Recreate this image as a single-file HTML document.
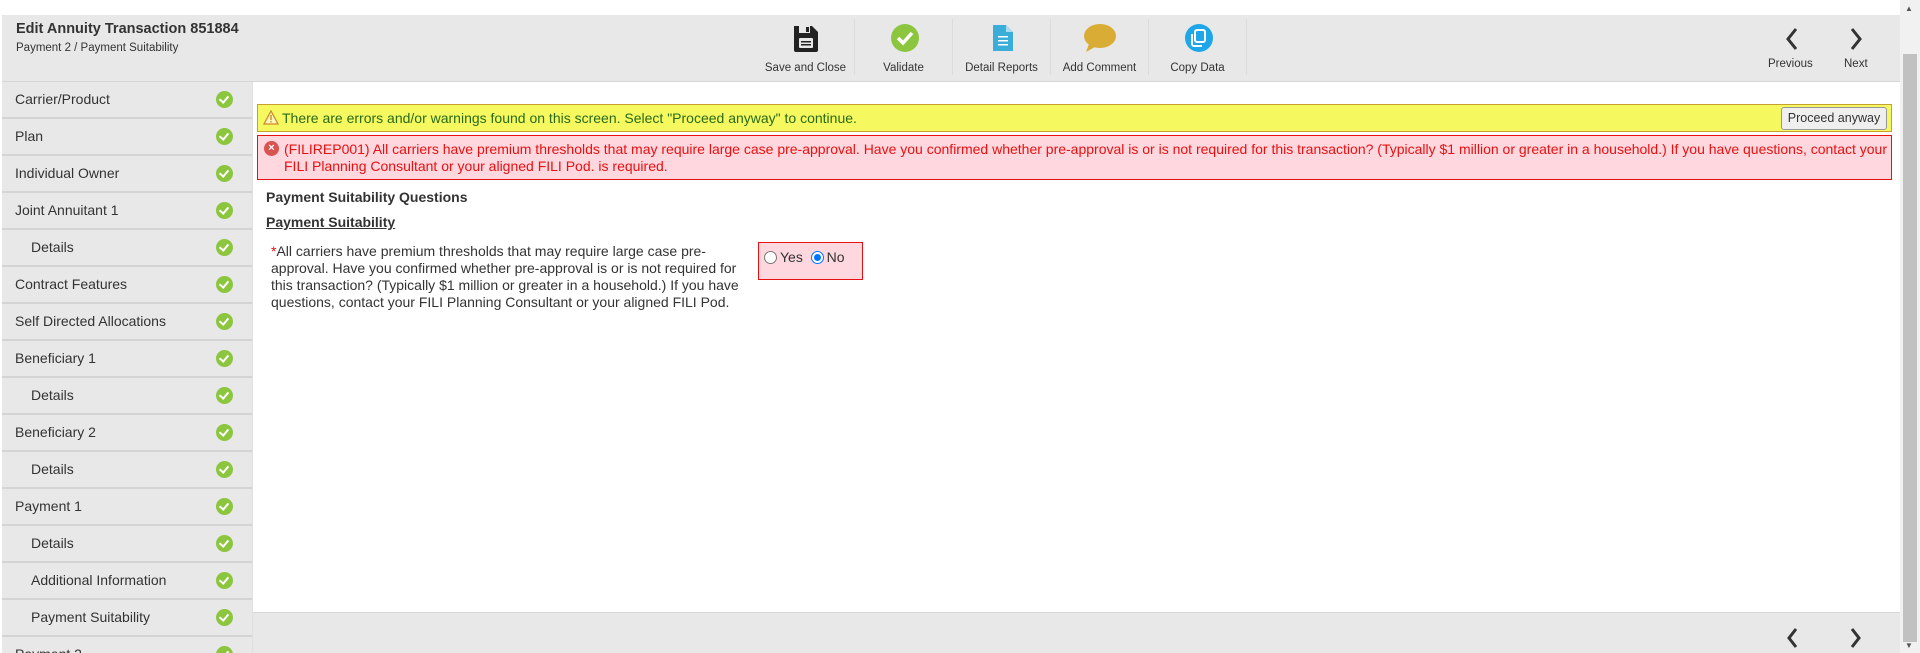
<!DOCTYPE html>
<html style="width:1920px;height:653px;overflow:hidden"><head><meta charset="utf-8"><style>
*{box-sizing:border-box;margin:0;padding:0}
body{width:1920px;height:653px;overflow:hidden;background:#fff;font-family:"Liberation Sans",Arial,sans-serif;color:#333;position:relative}
.hdr{position:absolute;left:2px;top:15px;width:1898px;height:67px;background:#e8e8e8;border-bottom:1px solid #d6d6d6}
.t1{position:absolute;left:14px;top:6px;font-size:14.5px;font-weight:bold;color:#333}
.t2{position:absolute;left:14px;top:27px;font-size:11.5px;color:#333}
.tb{position:absolute;top:4px;width:98px;height:56px;border-right:1px solid #dcdcdc;text-align:center}
.tb svg{position:absolute;left:35px;top:4px}
.tb span{position:absolute;left:0;right:0;top:43px;font-size:11.5px;color:#333}
.side{position:absolute;left:2px;top:82px;width:251px;height:571px;overflow:hidden;background:#e8e8e8;border-right:1px solid #e0e0e0}
.row{height:37px;border-bottom:2px solid #d4d4d4;position:relative;font-size:14px;line-height:35px;padding-left:13px;color:#333}
.row.s{padding-left:29px}
.ck{position:absolute;left:214px;top:9px;width:17px;height:17px;border-radius:50%;background:#8cc63f}
.ck:after{content:"";position:absolute;left:5px;top:3px;width:4px;height:7px;border:solid #fff;border-width:0 2px 2px 0;transform:rotate(40deg)}
.warn{position:absolute;left:257px;top:104px;width:1635px;height:28px;background:#f5f95f;border:1px solid #c8a030;font-size:14px;color:#2a6a1a;line-height:26px;padding-left:24px}
.btn{position:absolute;right:4px;top:2px;height:23px;width:106px;background:#efefef;border:1px solid #999;border-radius:3px;font-size:12.5px;color:#333;line-height:21px;text-align:center}
.err{position:absolute;left:257px;top:135px;width:1635px;height:45px;background:#ffd7df;border:1px solid #e81010;font-size:14px;color:#e81010;line-height:17px;padding:5px 0 0 26px}
.ex{position:absolute;left:6px;top:5px;width:15px;height:15px;border-radius:50%;background:#d9534f;color:#fff;font-size:11px;line-height:15px;text-align:center;font-weight:bold}
.h1{position:absolute;left:266px;top:189px;font-size:14px;font-weight:bold}
.h2{position:absolute;left:266px;top:214px;font-size:14px;font-weight:bold;text-decoration:underline}
.q{position:absolute;left:271px;top:243px;width:480px;font-size:14px;line-height:17px}
.rb{position:absolute;left:758px;top:242px;width:105px;height:38px;background:#ffd7df;border:1px solid #e81010;font-size:14px;padding:6px 0 0 5px}
.rad{display:inline-block;width:13px;height:13px;border-radius:50%;border:1px solid #777;background:#fff;vertical-align:-2px;margin-right:3px;position:relative}
.rad.on{border-color:#0075ff}
.rad.on:after{content:"";position:absolute;left:2px;top:2px;width:7px;height:7px;border-radius:50%;background:#0075ff}
.foot{position:absolute;left:253px;top:612px;width:1647px;height:41px;background:#e8e8e8;border-top:1px solid #d6d6d6}
.sb{position:absolute;left:1900px;top:0;width:20px;height:653px;background:#f1f1f1}
.th{position:absolute;left:1903px;top:54px;width:14px;height:588px;background:#c1c1c1}
</style></head><body>
<div class="hdr">
<div class="t1">Edit Annuity Transaction 851884</div>
<div class="t2">Payment 2 / Payment Suitability</div>
<div class="tb" style="left:755px;border-left:none"><svg width="28" height="30" viewBox="0 0 28 30"><path d="M2 3h18l6 6v18a2 2 0 0 1-2 2H4a2 2 0 0 1-2-2z" fill="#222"/><rect x="7" y="3" width="11" height="7" fill="#e8e8e8"/><rect x="14" y="4" width="3" height="5" fill="#222"/><rect x="7" y="15" width="14" height="10" rx="1" fill="#e8e8e8"/><rect x="9" y="18" width="10" height="1.5" fill="#222"/><rect x="9" y="21" width="10" height="1.5" fill="#222"/></svg><span>Save and Close</span></div>
<div class="tb" style="left:853px"><svg width="30" height="30"><circle cx="15" cy="15" r="14" fill="#8cc63f"/><path d="M8 15l5 5 9-10" stroke="#fff" stroke-width="3.5" fill="none"/></svg><span>Validate</span></div>
<div class="tb" style="left:951px"><svg width="28" height="30"><path d="M5 2h13l7 7v19H5z" fill="#3aaed8"/><path d="M18 2v7h7" fill="#a8dcef"/><rect x="10" y="13" width="10" height="1.5" fill="#fff"/><rect x="10" y="17" width="10" height="1.5" fill="#fff"/><rect x="10" y="21" width="10" height="1.5" fill="#fff"/></svg><span>Detail Reports</span></div>
<div class="tb" style="left:1049px"><svg width="34" height="30" style="left:32px"><ellipse cx="17" cy="13" rx="16" ry="12" fill="#d9ad35"/><path d="M6 21l-3 8 9-5z" fill="#d9ad35"/></svg><span>Add Comment</span></div>
<div class="tb" style="left:1147px"><svg width="30" height="30"><circle cx="15" cy="15" r="14" fill="#1ea7e8"/><rect x="11" y="7" width="10" height="12" rx="2" fill="none" stroke="#fff" stroke-width="2"/><path d="M8 11v10a2 2 0 0 0 2 2h8" fill="none" stroke="#fff" stroke-width="2"/></svg><span>Copy Data</span></div>
<svg style="position:absolute;left:1782px;top:12px" width="16" height="24"><path d="M12 2L4 12l8 10" stroke="#333" stroke-width="3" fill="none"/></svg>
<div style="position:absolute;left:1766px;top:43px;font-size:11.5px">Previous</div>
<svg style="position:absolute;left:1846px;top:12px" width="16" height="24"><path d="M4 2l8 10-8 10" stroke="#333" stroke-width="3" fill="none"/></svg>
<div style="position:absolute;left:1842px;top:43px;font-size:11.5px">Next</div>
</div>
<div class="side">
<div class="row">Carrier/Product<i class="ck"></i></div>
<div class="row">Plan<i class="ck"></i></div>
<div class="row">Individual Owner<i class="ck"></i></div>
<div class="row">Joint Annuitant 1<i class="ck"></i></div>
<div class="row s">Details<i class="ck"></i></div>
<div class="row">Contract Features<i class="ck"></i></div>
<div class="row">Self Directed Allocations<i class="ck"></i></div>
<div class="row">Beneficiary 1<i class="ck"></i></div>
<div class="row s">Details<i class="ck"></i></div>
<div class="row">Beneficiary 2<i class="ck"></i></div>
<div class="row s">Details<i class="ck"></i></div>
<div class="row">Payment 1<i class="ck"></i></div>
<div class="row s">Details<i class="ck"></i></div>
<div class="row s">Additional Information<i class="ck"></i></div>
<div class="row s">Payment Suitability<i class="ck"></i></div>
<div class="row">Payment 2<i class="ck"></i></div>
</div>
<div class="warn"><svg style="position:absolute;left:5px;top:5px" width="16" height="15"><path d="M8 1L15 14H1z" fill="#fff6c0" stroke="#d08a20" stroke-width="1.3"/><rect x="7.3" y="5" width="1.4" height="5" fill="#d08a20"/><rect x="7.3" y="11" width="1.4" height="1.4" fill="#d08a20"/></svg>There are errors and/or warnings found on this screen. Select "Proceed anyway" to continue.<div class="btn">Proceed anyway</div></div>
<div class="err"><span class="ex">×</span>(FILIREP001) All carriers have premium thresholds that may require large case pre-approval. Have you confirmed whether pre-approval is or is not required for this transaction? (Typically $1 million or greater in a household.) If you have questions, contact your<br>FILI Planning Consultant or your aligned FILI Pod. is required.</div>
<div class="h1">Payment Suitability Questions</div>
<div class="h2">Payment Suitability</div>
<div class="q"><span style="color:#e81010">*</span>All carriers have premium thresholds that may require large case pre-approval. Have you confirmed whether pre-approval is or is not required for this transaction? (Typically $1 million or greater in a household.) If you have questions, contact your FILI Planning Consultant or your aligned FILI Pod.</div>
<div class="rb"><i class="rad"></i>Yes &nbsp;<i class="rad on"></i>No</div>
<div class="foot">
<svg style="position:absolute;left:1532px;top:14px" width="14" height="22"><path d="M11 2L4 11l7 9" stroke="#333" stroke-width="3" fill="none"/></svg>
<svg style="position:absolute;left:1596px;top:14px" width="14" height="22"><path d="M3 2l7 9-7 9" stroke="#333" stroke-width="3" fill="none"/></svg>
</div>
<div class="sb"></div><div class="th"></div>
<div style="position:absolute;left:1905px;top:4px;font-size:8px;color:#555">▲</div>
<div style="position:absolute;left:1905px;top:641px;font-size:8px;color:#555">▼</div>
</body></html>
